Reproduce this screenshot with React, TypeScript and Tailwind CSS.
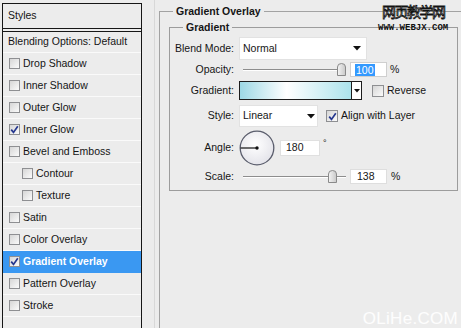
import React from "react";

const Check = ({ color = "#25378f" }: { color?: string }) => (
  <svg width="9" height="9" viewBox="0 0 9 9">
    <path d="M1.2 4.6 L3.5 7.4 L7.8 1.2" stroke={color} strokeWidth="1.7" fill="none" />
  </svg>
);

const Box = ({ checked, big }: { checked?: boolean; big?: boolean }) => (
  <div
    className={
      (big ? "w-[12px] h-[12px] " : "w-[11px] h-[11px] ") +
      "shrink-0 border border-[#8e8f92] bg-linear-to-br from-[#d6d6d6] to-[#fbfbfb] flex items-center justify-center"
    }
  >
    {checked && <Check />}
  </div>
);

const Arrow = () => (
  <svg width="8" height="5" viewBox="0 0 8 5">
    <path d="M0 0 H8 L4 4.5 Z" fill="#111" />
  </svg>
);

const Thumb = () => (
  <svg width="9" height="13" viewBox="0 0 9 13">
    <defs>
      <linearGradient id="tg" x1="0" y1="0" x2="1" y2="0">
        <stop offset="0" stopColor="#f4f4f4" />
        <stop offset="1" stopColor="#c9c9c9" />
      </linearGradient>
    </defs>
    <path d="M0.5 12.5 V4 Q0.5 0.5 4.5 0.5 Q8.5 0.5 8.5 4 V12.5 Z" fill="url(#tg)" stroke="#8a8a8a" />
  </svg>
);

const Slider = ({ pos }: { pos: number }) => (
  <div className="relative w-[103px] h-[15px] ml-[8px] flex items-center">
    <div className="w-full h-[2px] border-t border-[#8d8d8d] border-b border-b-[#ffffff]" />
    <div className="absolute top-[1px]" style={{ left: pos }}>
      <Thumb />
    </div>
  </div>
);

const rows: { label: string; checked?: boolean; indent?: boolean; active?: boolean }[] = [
  { label: "Drop Shadow" },
  { label: "Inner Shadow" },
  { label: "Outer Glow" },
  { label: "Inner Glow", checked: true },
  { label: "Bevel and Emboss" },
  { label: "Contour", indent: true },
  { label: "Texture", indent: true },
  { label: "Satin" },
  { label: "Color Overlay" },
  { label: "Gradient Overlay", checked: true, active: true },
  { label: "Pattern Overlay" },
  { label: "Stroke" },
];

const Label = ({ children }: { children: React.ReactNode }) => (
  <div className="w-[65px] shrink-0 text-right pr-[1px]">{children}</div>
);

export default function App() {
  return (
    <div className="relative w-[461px] h-[328px] bg-[#ececec] flex overflow-hidden font-['Liberation_Sans',sans-serif] text-[10.5px] text-[#151515]">
      {/* Left styles list */}
      <div className="ml-[2px] mt-[3px] w-[140px] h-[340px] shrink-0 border border-[#161616] flex flex-col bg-[#ececec]">
        <div className="h-[25px] border-b border-[#161616] flex items-center pl-[5px] shrink-0">Styles</div>
        <div className="h-[3px] border-b border-[#161616] shrink-0" />
        <div className="h-[21px] border-b border-[#fafafa] flex items-center pl-[5px] shrink-0">
          Blending Options: Default
        </div>
        {rows.map((r) => (
          <div
            key={r.label}
            className={
              "h-[22px] shrink-0 border-b flex items-center " +
              (r.indent ? "pl-[19px] " : "pl-[6px] ") +
              (r.active ? "bg-[#3a98f2] border-[#3a98f2] text-white font-bold" : "border-[#fafafa]")
            }
          >
            <Box checked={r.checked} />
            <span className="ml-[3px]">{r.label}</span>
          </div>
        ))}
      </div>

      {/* Right panel */}
      <div className="flex-1 ml-[12px] border-l border-[#d8d8d8] pl-[4px]">
        <fieldset className="mt-[4px] w-[330px] h-[340px] border border-[#a2a2a2]">
          <legend className="ml-[13px] px-[3px] font-bold leading-[14px]">Gradient Overlay</legend>
          <fieldset className="ml-[9px] mt-[2px] w-[289px] border border-[#9c9c9c] pt-[3px] pb-[6px]">
            <legend className="ml-[13px] px-[3px] font-bold leading-[14px]">Gradient</legend>

            {/* Blend Mode */}
            <div className="flex items-center h-[23px]">
              <Label>Blend Mode:</Label>
              <div className="ml-[4px] w-[128px] h-[23px] bg-white border border-[#e2e2e2] flex items-center justify-between pl-[3px] pr-[5px]">
                <span>Normal</span>
                <Arrow />
              </div>
            </div>

            {/* Opacity */}
            <div className="flex items-center h-[15px] mt-[2px]">
              <Label>Opacity:</Label>
              <Slider pos={94} />
              <div className="ml-[4px] w-[37px] h-[15px] bg-white border border-[#cfcfcf] flex items-center pl-[4px]">
                <span className="bg-[#3399ff] text-white px-[1px] leading-[12px]">100</span>
              </div>
              <span className="ml-[3px]">%</span>
            </div>

            {/* Gradient */}
            <div className="flex items-center h-[19px] mt-[4px]">
              <Label>Gradient:</Label>
              <div className="ml-[4px] w-[123px] h-[19px] border border-[#1c1c1c] flex bg-white">
                <div className="flex-1 bg-[linear-gradient(to_right,#9dd8e5,#ffffff_42%,#ace3ec)]" />
                <div className="w-[10px] border-l border-[#1c1c1c] flex items-center justify-center">
                  <svg width="6" height="4" viewBox="0 0 6 4">
                    <path d="M0 0 H6 L3 3.5 Z" fill="#111" />
                  </svg>
                </div>
              </div>
              <div className="ml-[10px]">
                <Box big />
              </div>
              <span className="ml-[3px]">Reverse</span>
            </div>

            {/* Style */}
            <div className="flex items-center h-[22px] mt-[5px]">
              <Label>Style:</Label>
              <div className="ml-[4px] w-[79px] h-[22px] bg-white border border-[#e2e2e2] flex items-center justify-between pl-[3px] pr-[2px]">
                <span>Linear</span>
                <Arrow />
              </div>
              <div className="ml-[8px]">
                <Box big checked />
              </div>
              <span className="ml-[3px]">Align with Layer</span>
            </div>

            {/* Angle */}
            <div className="flex items-center h-[35px] mt-[3px]">
              <Label>Angle:</Label>
              <div className="ml-[4px] w-[36px] h-[36px]">
                <svg width="36" height="36" viewBox="0 0 36 36">
                  <defs>
                    <radialGradient id="dg" cx="0.45" cy="0.4" r="0.6">
                      <stop offset="0" stopColor="#ffffff" />
                      <stop offset="1" stopColor="#e4e4ea" />
                    </radialGradient>
                  </defs>
                  <circle cx="18" cy="18" r="16.8" fill="url(#dg)" stroke="#5a5d6c" strokeWidth="1.3" />
                  <line x1="1.5" y1="18" x2="18" y2="18" stroke="#111" strokeWidth="1.2" />
                  <circle cx="18" cy="18" r="1.7" fill="#111" />
                </svg>
              </div>
              <div className="ml-[5px] w-[40px] h-[16px] bg-white border border-[#e0e0e0] flex items-center pl-[5px]">
                180
              </div>
              <span className="ml-[3px] relative -top-[4px] text-[9px]">°</span>
            </div>

            {/* Scale */}
            <div className="flex items-center h-[15px] mt-[4px]">
              <Label>Scale:</Label>
              <Slider pos={85} />
              <div className="ml-[4px] w-[37px] h-[15px] bg-white border border-[#dedede] flex items-center pl-[6px]">
                138
              </div>
              <span className="ml-[4px]">%</span>
            </div>
          </fieldset>
        </fieldset>
      </div>

      {/* Watermarks */}
      <div className="absolute left-[382px] top-[3px] text-[14px] leading-[17px] tracking-[-1.5px] font-['Noto_Sans_CJK_SC',sans-serif] text-white [-webkit-text-stroke:0.8px_#111]">
        网页教学网
      </div>
      <div className="absolute left-[378px] top-[23px] text-[9px] leading-[11px] font-bold font-['Liberation_Mono',monospace] text-[#111]">
        WWW.WEBJX.COM
      </div>
      <div className="absolute right-[3px] bottom-[0px] text-[17px] leading-[18px] text-white/90 tracking-[0.3px]">
        OLiHe.COM
      </div>
    </div>
  );
}
